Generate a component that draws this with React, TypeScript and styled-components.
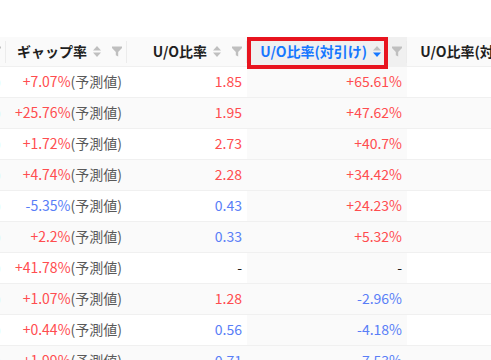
import React from 'react';
import styled, { createGlobalStyle } from 'styled-components';

const GlobalStyle = createGlobalStyle`
  html, body { margin: 0; padding: 0; background: #ffffff; }
  body { font-family: "Noto Sans CJK JP", "Noto Sans", sans-serif; }
`;

type Tone = 'up' | 'down' | 'plain' | 'muted';

const toneColor: Record<Tone, string> = {
  up: '#ff4d4f',
  down: '#597ef7',
  plain: '#1f1f1f',
  muted: '#595959',
};

const Page = styled.div`
  width: 491px;
  height: 360px;
  overflow: hidden;
  padding-top: 37px;
  box-sizing: border-box;
  background: #ffffff;
`;

const ScrolledTable = styled.table`
  border-collapse: separate;
  border-spacing: 0;
  table-layout: fixed;
  width: 681px;
  margin-left: -114px;
  font-size: 14px;
  line-height: 1.4;
  color: #1f1f1f;
`;

const HeadCell = styled.th<{ $sorted?: boolean }>`
  position: relative;
  height: 29px;
  padding: 0 0 0 8px;
  background: ${(p) => (p.$sorted ? '#f0f0f0' : '#fafafa')};
  border-bottom: 1px solid #f0f0f0;
  font-weight: 700;
  text-align: right;
  white-space: nowrap;
  &::before {
    content: '';
    position: absolute;
    right: 0;
    top: 50%;
    transform: translateY(-50%);
    width: 1px;
    height: 22px;
    background: #ececec;
  }
`;

const HeadInner = styled.div`
  display: flex;
  align-items: center;
  justify-content: flex-end;
`;

const HeadTitle = styled.span<{ $active?: boolean }>`
  flex: 1;
  min-width: 0;
  overflow: hidden;
  text-align: right;
  color: ${(p) => (p.$active ? '#1677ff' : '#1f1f1f')};
`;

const SortBox = styled.span`
  display: inline-flex;
  margin-left: 6px;
  width: 8px;
`;

const FilterTrigger = styled.span`
  display: inline-flex;
  align-items: center;
  justify-content: center;
  width: 20px;
  margin-left: 6px;
`;

const Highlight = styled.div`
  position: absolute;
  left: 0;
  top: 0;
  width: 141px;
  height: 32px;
  border: 4px solid #e8141f;
  box-sizing: border-box;
  z-index: 2;
  pointer-events: none;
`;

const BodyCell = styled.td<{ $sorted?: boolean; $striped?: boolean }>`
  height: 30px;
  padding: 0 5px 0 8px;
  text-align: right;
  white-space: nowrap;
  overflow: hidden;
  border-bottom: 1px solid #f0f0f0;
  background: ${(p) => (p.$sorted || p.$striped ? '#fafafa' : '#ffffff')};
`;

const Value = styled.span<{ $tone: Tone }>`
  color: ${(p) => toneColor[p.$tone]};
`;

const SortIcon = ({ down }: { down?: boolean }) => (
  <svg width="8" height="13" viewBox="0 0 8 13">
    <polygon points="0,5.5 4,1 8,5.5" fill="#bfbfbf" />
    <polygon points="0,7.5 4,12 8,7.5" fill={down ? '#1677ff' : '#bfbfbf'} />
  </svg>
);

const FilterIcon = () => (
  <svg width="10" height="11" viewBox="0 0 10 11">
    <path d="M0 0.5 H10 V2 L6.2 6 V10.5 L3.8 9.2 V6 L0 2 Z" fill="#bfbfbf" />
  </svg>
);

type Col = { title: string; width: number; active?: boolean; sortedDown?: boolean; highlight?: boolean };

const columns: Col[] = [
  { title: 'ギャップ率(前日)', width: 120 },
  { title: 'ギャップ率', width: 121 },
  { title: 'U/O比率', width: 120 },
  { title: 'U/O比率(対引け)', width: 160, active: true, sortedDown: true, highlight: true },
  { title: 'U/O比率(対引け)', width: 160 },
];

type Cell = [string, Tone];
type Row = { prev: string; gap: Cell; uo: Cell; uoClose: Cell };

const rows: Row[] = [
  { prev: '+2.11%(予測値)', gap: ['+7.07%', 'up'], uo: ['1.85', 'up'], uoClose: ['+65.61%', 'up'] },
  { prev: '+3.40%(予測値)', gap: ['+25.76%', 'up'], uo: ['1.95', 'up'], uoClose: ['+47.62%', 'up'] },
  { prev: '+0.52%(予測値)', gap: ['+1.72%', 'up'], uo: ['2.73', 'up'], uoClose: ['+40.7%', 'up'] },
  { prev: '+1.18%(予測値)', gap: ['+4.74%', 'up'], uo: ['2.28', 'up'], uoClose: ['+34.42%', 'up'] },
  { prev: '-0.95%(予測値)', gap: ['-5.35%', 'down'], uo: ['0.43', 'down'], uoClose: ['+24.23%', 'up'] },
  { prev: '+0.61%(予測値)', gap: ['+2.2%', 'up'], uo: ['0.33', 'down'], uoClose: ['+5.32%', 'up'] },
  { prev: '+9.30%(予測値)', gap: ['+41.78%', 'up'], uo: ['-', 'plain'], uoClose: ['-', 'plain'] },
  { prev: '+0.22%(予測値)', gap: ['+1.07%', 'up'], uo: ['1.28', 'up'], uoClose: ['-2.96%', 'down'] },
  { prev: '+0.10%(予測値)', gap: ['+0.44%', 'up'], uo: ['0.56', 'down'], uoClose: ['-4.18%', 'down'] },
  { prev: '+0.35%(予測値)', gap: ['+1.99%', 'up'], uo: ['0.71', 'down'], uoClose: ['-7.53%', 'down'] },
];

export default function App() {
  return (
    <>
      <GlobalStyle />
      <Page>
        <ScrolledTable>
          <colgroup>
            {columns.map((c, i) => (
              <col key={i} style={{ width: c.width }} />
            ))}
          </colgroup>
          <thead>
            <tr>
              {columns.map((c, i) => (
                <HeadCell key={i} $sorted={c.active}>
                  {c.highlight && <Highlight />}
                  <HeadInner>
                    <HeadTitle $active={c.active}>{c.title}</HeadTitle>
                    <SortBox>
                      <SortIcon down={c.sortedDown} />
                    </SortBox>
                    <FilterTrigger>
                      <FilterIcon />
                    </FilterTrigger>
                  </HeadInner>
                </HeadCell>
              ))}
            </tr>
          </thead>
          <tbody>
            {rows.map((r, i) => {
              const striped = i % 2 === 1;
              return (
                <tr key={i}>
                  <BodyCell $striped={striped}>
                    <Value $tone="muted">{r.prev}</Value>
                  </BodyCell>
                  <BodyCell $striped={striped}>
                    <Value $tone={r.gap[1]}>{r.gap[0]}</Value>
                    <Value $tone="muted">(予測値)</Value>
                  </BodyCell>
                  <BodyCell $striped={striped}>
                    <Value $tone={r.uo[1]}>{r.uo[0]}</Value>
                  </BodyCell>
                  <BodyCell $striped={striped} $sorted>
                    <Value $tone={r.uoClose[1]}>{r.uoClose[0]}</Value>
                  </BodyCell>
                  <BodyCell $striped={striped} />
                </tr>
              );
            })}
          </tbody>
        </ScrolledTable>
      </Page>
    </>
  );
}
